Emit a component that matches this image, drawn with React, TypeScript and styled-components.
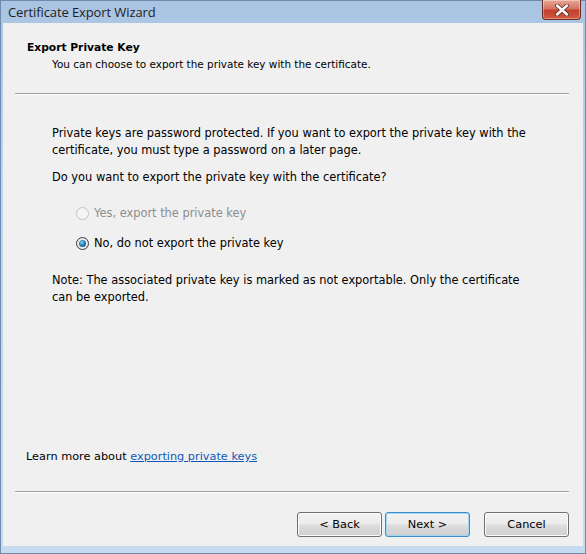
import styled, { createGlobalStyle } from "styled-components";

const GlobalStyle = createGlobalStyle`
  html, body {
    margin: 0;
    padding: 0;
  }
  body {
    width: 586px;
    height: 554px;
    overflow: hidden;
    font-family: "DejaVu Sans", "Liberation Sans", sans-serif;
  }
`;

const Frame = styled.div`
  width: 586px;
  height: 554px;
  box-sizing: border-box;
  background: linear-gradient(180deg, #a9c4e2 0%, #bcd4ee 30%, #c6daf1 100%);
  border: 1px solid #6f8aab;
  display: flex;
  flex-direction: column;
  padding: 0 2px 7px 2px;
`;

const TitleBar = styled.div`
  height: 22px;
  display: flex;
  align-items: flex-start;
  justify-content: space-between;
  padding-left: 5px;
`;

const Title = styled.div`
  font-family: "Open Sans", "Noto Sans", sans-serif;
  font-size: 13px;
  letter-spacing: -0.1px;
  color: #1e1e1e;
  line-height: 20px;
  padding-top: 1px;
`;

const CloseButton = styled.div`
  width: 37px;
  height: 19px;
  margin-right: 2px;
  margin-top: -1px;
  border: 1px solid #6b2b25;
  border-top: none;
  border-radius: 0 0 4px 4px;
  background: linear-gradient(180deg, #e8a797 0%, #d47462 45%, #c2402c 55%, #d0593f 100%);
  display: flex;
  align-items: center;
  justify-content: center;
  box-shadow: inset 0 0 0 1px rgba(255, 255, 255, 0.35);
`;

const Client = styled.div`
  flex: 1;
  background: #f0f0f0;
  display: flex;
  flex-direction: column;
`;

const Header = styled.div`
  padding: 16px 0 0 24px;
  height: 54px;
`;

const HeaderTitle = styled.div`
  font-weight: bold;
  font-size: 10.7px;
  color: #000;
  line-height: 17px;
`;

const HeaderSub = styled.div`
  font-size: 10.45px;
  color: #000;
  padding-left: 25px;
  line-height: 17px;
`;

const Separator = styled.div`
  height: 0;
  margin: 0 14px 0 12px;
  border-top: 1px solid #a0a0a0;
  border-bottom: 1px solid #ffffff;
`;

const Body = styled.div`
  flex: 1;
  padding: 30px 50px 0 49px;
  font-size: 11.4px;
  color: #000;
  line-height: 17px;
`;

const Paragraph = styled.p`
  margin: 0 0 10px 0;
`;

const RadioGroup = styled.div`
  display: flex;
  flex-direction: column;
  gap: 13px;
  padding: 9px 0 20px 24px;
`;

const RadioRow = styled.label<{ $disabled?: boolean }>`
  display: flex;
  align-items: center;
  gap: 5px;
  color: ${(p) => (p.$disabled ? "#8d8d8d" : "#000")};
`;

const RadioCircle = styled.span<{ $checked?: boolean; $disabled?: boolean }>`
  width: 13px;
  height: 13px;
  box-sizing: border-box;
  border-radius: 50%;
  border: 1px solid ${(p) => (p.$disabled ? "#c4c4c4" : "#3c3c3c")};
  background: ${(p) =>
    p.$disabled
      ? "#f4f4f4"
      : "radial-gradient(circle at 50% 50%, #ffffff 0%, #dcdcdc 100%)"};
  display: flex;
  align-items: center;
  justify-content: center;
  flex-shrink: 0;

  &::after {
    content: "";
    display: ${(p) => (p.$checked ? "block" : "none")};
    width: 7px;
    height: 7px;
    border-radius: 50%;
    background: radial-gradient(circle at 40% 35%, #8fd3f5 0%, #2a7fb8 45%, #0d3f6e 100%);
  }
`;

const LearnMore = styled.div`
  padding: 0 0 26px 23px;
  font-size: 11.3px;
  color: #000;
  line-height: 17px;
`;

const HelpLink = styled.a`
  color: #0f58b8;
  text-decoration: underline;
  cursor: pointer;
`;

const Footer = styled.div`
  display: flex;
  justify-content: flex-end;
  align-items: center;
  gap: 3px;
  padding: 19px 14px 9px 0;
`;

const Button = styled.button<{ $default?: boolean; $gapBefore?: boolean }>`
  width: 85px;
  height: 25px;
  font-family: "DejaVu Sans", "Liberation Sans", sans-serif;
  font-size: 11.3px;
  color: #000;
  border-radius: 3px;
  border: 1px solid ${(p) => (p.$default ? "#3c8ec4" : "#707070")};
  background: linear-gradient(180deg, #f2f2f2 0%, #ebebeb 48%, #dddddd 52%, #cfcfcf 100%);
  box-shadow: inset 0 0 0 1px ${(p) => (p.$default ? "#9fd6f3" : "#fbfbfb")};
  margin-left: ${(p) => (p.$gapBefore ? "11px" : "0")};
  padding: 0;
`;

export default function App() {
  return (
    <>
      <GlobalStyle />
      <Frame>
        <TitleBar>
          <Title>Certificate Export Wizard</Title>
          <CloseButton>
            <svg width="14" height="12" viewBox="0 0 14 12">
              <path
                d="M2 1.5 L12 10.5 M12 1.5 L2 10.5"
                stroke="#5a2a24"
                strokeWidth="4"
                strokeLinecap="round"
              />
              <path
                d="M2 1.5 L12 10.5 M12 1.5 L2 10.5"
                stroke="#ffffff"
                strokeWidth="2.4"
                strokeLinecap="round"
              />
            </svg>
          </CloseButton>
        </TitleBar>
        <Client>
          <Header>
            <HeaderTitle>Export Private Key</HeaderTitle>
            <HeaderSub>You can choose to export the private key with the certificate.</HeaderSub>
          </Header>
          <Separator />
          <Body>
            <Paragraph>
              Private keys are password protected. If you want to export the private key with the
              certificate, you must type a password on a later page.
            </Paragraph>
            <Paragraph>Do you want to export the private key with the certificate?</Paragraph>
            <RadioGroup>
              <RadioRow $disabled>
                <RadioCircle $disabled />
                Yes, export the private key
              </RadioRow>
              <RadioRow>
                <RadioCircle $checked />
                No, do not export the private key
              </RadioRow>
            </RadioGroup>
            <Paragraph>
              Note: The associated private key is marked as not exportable. Only the certificate
              can be exported.
            </Paragraph>
          </Body>
          <LearnMore>
            Learn more about <HelpLink>exporting private keys</HelpLink>
          </LearnMore>
          <Separator />
          <Footer>
            <Button>&lt; Back</Button>
            <Button $default>Next &gt;</Button>
            <Button $gapBefore>Cancel</Button>
          </Footer>
        </Client>
      </Frame>
    </>
  );
}
